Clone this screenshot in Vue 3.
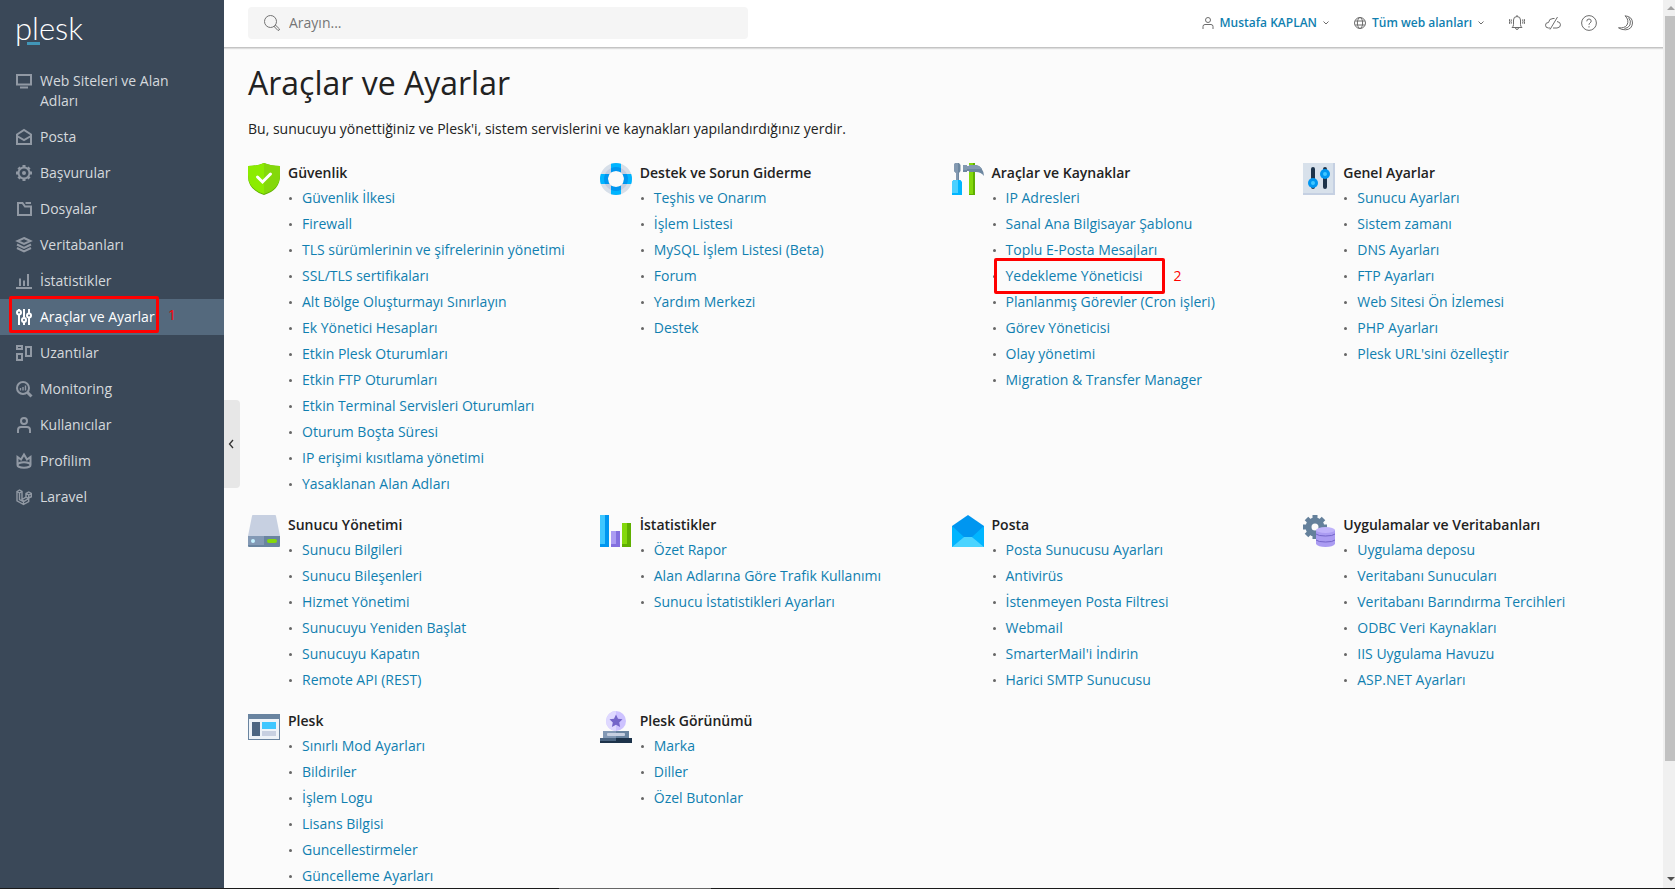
<script setup>
import { ref } from 'vue'

const search = ref('')

const menu = [
  { icon: 'screen', label: 'Web Siteleri ve Alan Adları' },
  { icon: 'mail', label: 'Posta' },
  { icon: 'gear', label: 'Başvurular' },
  { icon: 'folder', label: 'Dosyalar' },
  { icon: 'layers', label: 'Veritabanları' },
  { icon: 'chart', label: 'İstatistikler' },
  { icon: 'sliders', label: 'Araçlar ve Ayarlar', active: true, note: '1' },
  { icon: 'blocks', label: 'Uzantılar' },
  { icon: 'monitoring', label: 'Monitoring' },
  { icon: 'user', label: 'Kullanıcılar' },
  { icon: 'crown', label: 'Profilim' },
  { icon: 'laravel', label: 'Laravel' },
]

const groups = [
  {
    icon: 'shield',
    title: 'Güvenlik',
    links: [
      'Güvenlik İlkesi', 'Firewall', 'TLS sürümlerinin ve şifrelerinin yönetimi', 'SSL/TLS sertifikaları',
      'Alt Bölge Oluşturmayı Sınırlayın', 'Ek Yönetici Hesapları', 'Etkin Plesk Oturumları', 'Etkin FTP Oturumları',
      'Etkin Terminal Servisleri Oturumları', 'Oturum Boşta Süresi', 'IP erişimi kısıtlama yönetimi', 'Yasaklanan Alan Adları',
    ],
  },
  {
    icon: 'lifebuoy',
    title: 'Destek ve Sorun Giderme',
    links: ['Teşhis ve Onarım', 'İşlem Listesi', 'MySQL İşlem Listesi (Beta)', 'Forum', 'Yardım Merkezi', 'Destek'],
  },
  {
    icon: 'tools',
    title: 'Araçlar ve Kaynaklar',
    marked: 'Yedekleme Yöneticisi',
    links: [
      'IP Adresleri', 'Sanal Ana Bilgisayar Şablonu', 'Toplu E-Posta Mesajları', 'Yedekleme Yöneticisi',
      'Planlanmış Görevler (Cron işleri)', 'Görev Yöneticisi', 'Olay yönetimi', 'Migration & Transfer Manager',
    ],
  },
  {
    icon: 'settings',
    title: 'Genel Ayarlar',
    links: [
      'Sunucu Ayarları', 'Sistem zamanı', 'DNS Ayarları', 'FTP Ayarları', 'Web Sitesi Ön İzlemesi',
      'PHP Ayarları', "Plesk URL'sini özelleştir",
    ],
  },
  {
    icon: 'server',
    title: 'Sunucu Yönetimi',
    links: [
      'Sunucu Bilgileri', 'Sunucu Bileşenleri', 'Hizmet Yönetimi', 'Sunucuyu Yeniden Başlat',
      'Sunucuyu Kapatın', 'Remote API (REST)',
    ],
  },
  {
    icon: 'bars',
    title: 'İstatistikler',
    links: ['Özet Rapor', 'Alan Adlarına Göre Trafik Kullanımı', 'Sunucu İstatistikleri Ayarları'],
  },
  {
    icon: 'envelope',
    title: 'Posta',
    links: [
      'Posta Sunucusu Ayarları', 'Antivirüs', 'İstenmeyen Posta Filtresi', 'Webmail',
      "SmarterMail'i İndirin", 'Harici SMTP Sunucusu',
    ],
  },
  {
    icon: 'database',
    title: 'Uygulamalar ve Veritabanları',
    links: [
      'Uygulama deposu', 'Veritabanı Sunucuları', 'Veritabanı Barındırma Tercihleri',
      'ODBC Veri Kaynakları', 'IIS Uygulama Havuzu', 'ASP.NET Ayarları',
    ],
  },
  {
    icon: 'window',
    title: 'Plesk',
    links: [
      'Sınırlı Mod Ayarları', 'Bildiriler', 'İşlem Logu', 'Lisans Bilgisi', 'Guncellestirmeler', 'Güncelleme Ayarları',
    ],
  },
  {
    icon: 'stamp',
    title: 'Plesk Görünümü',
    links: ['Marka', 'Diller', 'Özel Butonlar'],
  },
]
</script>

<template>
  <div class="page">
    <aside class="sidebar">
      <a class="brand" href="#" aria-label="plesk">
        <span class="brand-name">plesk</span>
        <span class="brand-line"></span>
      </a>
      <nav>
        <a v-for="item in menu" :key="item.label" href="#" class="menu-item" :class="{ active: item.active }">
          <svg class="menu-icon" viewBox="0 0 16 16" aria-hidden="true">
            <g v-if="item.icon === 'screen'"><rect x="1" y="2" width="14" height="9.5" /><path d="M4 14.5h8" /></g>
            <g v-else-if="item.icon === 'mail'"><path d="M1 5.5 8 1l7 4.500V15H1z" /><path d="M1 7l7 4 7-4" /></g>
            <g v-else-if="item.icon === 'gear'">
              <circle cx="8" cy="8" r="5.500" /><circle cx="8" cy="8" r="2" class="solid" />
              <path d="M8 0v2.500M8 13.500V16M0 8h2.500M13.500 8H16M2.500 2.500l1.700 1.700M11.800 11.800l1.700 1.700M2.500 13.500l1.700-1.700M11.800 4.200l1.700-1.700" class="teeth" />
            </g>
            <g v-else-if="item.icon === 'folder'"><path d="M2 2h4.500l2.500 3.500h6V14H2zM9.500 2H15" /></g>
            <g v-else-if="item.icon === 'layers'">
              <path d="M8 1l6.500 3L8 7 1.500 4zM1 7.500l7 3.500 7-3.500M1 11l7 3.500 7-3.500" />
            </g>
            <g v-else-if="item.icon === 'chart'"><path d="M0 15h16M4 5.500V13M8 7.500V13M12 1v12" /></g>
            <g v-else-if="item.icon === 'sliders'">
              <path d="M3 0v1.500M3 6v10M8 0v8.500M8 13v3M13 0v4M13 9v7" />
              <circle cx="3" cy="3.600" r="2" /><circle cx="8" cy="11" r="2" /><circle cx="13" cy="6.500" r="2" />
            </g>
            <g v-else-if="item.icon === 'blocks'">
              <rect x="1" y="1" width="5" height="3" /><rect x="10" y="2" width="5" height="9" /><rect x="1" y="9" width="5" height="6" />
            </g>
            <g v-else-if="item.icon === 'monitoring'">
              <circle cx="7" cy="7" r="6" /><path d="M11.500 11.500l4 4" class="handle" /><path d="M4.500 7v2.500M7 6v3.500M9.500 4.500v5" class="thin" />
            </g>
            <g v-else-if="item.icon === 'user'">
              <circle cx="8" cy="4" r="3" /><path d="M2 16v-3q0-3 3-3h6q3 0 3 3v3" />
            </g>
            <g v-else-if="item.icon === 'crown'">
              <path d="M1.500 11.500V4l3.500 2.500L8 1.500l3 5L14.500 4v7.500" /><ellipse cx="8" cy="12" rx="6.500" ry="2.800" />
            </g>
            <g v-else class="thin">
              <path d="M1 2.500 3.500 1 6 2.500v8l4-2.300V4.500L12.700 3l2.600 1.500v3.200L12.700 9v3.500L7.500 15.500 1 11.800zM1 2.500 3.500 4 6 2.500M3.500 4v6.500l4 2.200V15.500M7.500 12.700 12.700 9.500M10 4.500 12.700 6v3M12.700 6l2.600-1.500M6 10.500 7.500 12M10 8.200l2.700 1.300" />
            </g>
          </svg>
          <span>{{ item.label }}</span>
          <span v-if="item.note" class="menu-mark"><b>{{ item.note }}</b></span>
        </a>
      </nav>
      <button type="button" class="collapse" aria-label="Menüyü daralt">
        <svg viewBox="0 0 6 10"><path d="M5 1 1.500 5 5 9" /></svg>
      </button>
    </aside>

    <div class="content">
      <header class="topbar">
        <label class="search">
          <svg viewBox="0 0 16 16" aria-hidden="true">
            <circle cx="6.500" cy="6.500" r="6" /><path d="M10.300 11.700l1.400-1.400 3.800 3.700q.3 1.200-1.500 1.500z" />
          </svg>
          <input v-model="search" type="text" placeholder="Arayın..." aria-label="Arayın" />
        </label>
        <div class="actions">
          <button type="button" class="dropdown">
            <svg class="small" viewBox="0 0 12 12"><circle cx="6" cy="3" r="2.500" /><path d="M1 12V9.500Q1 7.500 3 7.500h6q2 0 2 2V12" /></svg>
            Mustafa KAPLAN
            <svg class="chevron" viewBox="0 0 6 4"><path d="M.5.500 3 3 5.500.500" /></svg>
          </button>
          <button type="button" class="dropdown">
            <svg class="small" viewBox="0 0 12 12"><circle cx="6" cy="6" r="5.500" /><ellipse cx="6" cy="6" rx="2.600" ry="5.500" /><path d="M1.200 4h9.600M1.200 8h9.600" /></svg>
            Tüm web alanları
            <svg class="chevron" viewBox="0 0 6 4"><path d="M.5.500 3 3 5.500.500" /></svg>
          </button>
          <div class="icons">
            <button type="button" aria-label="Bildirimler">
              <svg viewBox="0 0 16 16"><path d="M3 12.500q1.500-1 1.500-3V5Q4.500 1.500 8 1.500T11.500 5v4.500q0 2 1.500 3zM6.500 12.500q0 2 1.500 2t1.500-2M2.500 4.500q-1 2 0 4M.8 4q-1 2.500 0 5M13.500 4.500q1 2 0 4M15.200 4q1 2.500 0 5M8 0v1.500" /></svg>
            </button>
            <button type="button" aria-label="Bulut">
              <svg viewBox="0 0 16 16"><path d="M5 13H3.500Q.5 13 .5 10.200T3.500 7.500Q4 3.500 8 3.500h1.500M12 6.500q3.500.5 3.500 3.300T12 13H8M12.500 2 5 14.500" /></svg>
            </button>
            <button type="button" aria-label="Yardım">
              <svg viewBox="0 0 16 16"><circle cx="8" cy="8" r="7.400" /><path d="M5.800 6.300q0-2.300 2.200-2.300t2.200 2Q10.200 7.200 9 8T8 9.800M8 11.200v1.300" /></svg>
            </button>
            <button type="button" aria-label="Koyu tema">
              <svg viewBox="0 0 16 16"><path d="M8 .8Q15.500 1.500 15.500 8 15 14.500 8.500 14.800 4.500 15 1.500 12.800 7.500 13.500 10 10 12.500 5 8 .8zM11.500 2.500Q14.500 6 13 10 11.500 13 7.500 13.600" /></svg>
            </button>
          </div>
        </div>
      </header>

      <main>
        <h1>Araçlar ve Ayarlar</h1>
        <p>Bu, sunucuyu yönettiğiniz ve Plesk'i, sistem servislerini ve kaynakları yapılandırdığınız yerdir.</p>
        <div class="groups">
          <section v-for="group in groups" :key="group.title" class="group">
            <svg class="group-icon" viewBox="0 0 32 32" aria-hidden="true">
              <g v-if="group.icon === 'shield'">
                <path d="M16 0Q9 3 0 3v10q0 14 16 19 16-5 16-19V3Q23 3 16 0z" fill="#5faf00" />
                <path d="M16 0Q9 3 0 3v9q0 14 16 19z" fill="#8cec00" />
                <path d="M16 0q7 3 16 3v9q0 14-16 19z" fill="#84d80b" />
                <path d="M9.500 14l5 5 8-8" fill="none" stroke="#fff" stroke-width="3" stroke-linecap="round" />
              </g>
              <g v-else-if="group.icon === 'lifebuoy'">
                <circle cx="16" cy="16" r="12" fill="none" stroke="#d7dfe9" stroke-width="8" />
                <circle cx="16" cy="16" r="10" fill="none" stroke="#c5cee0" stroke-width="4" />
                <path d="M11 .8Q16-.8 21 .8v8.500q-5-2.600-10 0zM11 31.200q5 1.600 10 0v-8.500q-5 2.600-10 0zM.8 11Q-.8 16 .8 21h8.500q-2.600-5 0-10zM31.200 11q1.600 5 0 10h-8.500q2.600-5 0-10z" fill="#00b5ff" />
                <path d="M11 5.200q5-2.400 10 0v4.100q-5-2.600-10 0zM11 26.800q5 2.400 10 0v-4.100q-5 2.600-10 0zM5.200 11q-2.400 5 0 10h4.100q-2.600-5 0-10zM26.800 11q2.400 5 0 10h-4.100q2.600-5 0-10z" fill="#0096f0" />
              </g>
              <g v-else-if="group.icon === 'tools'">
                <path d="M3 0h4l1.500 2v6L7 10v8H4v-8L2 8V2z" fill="#6d87a0" />
                <path d="M2 2l1-2h3v18H4v-8L2 8z" fill="#8399b1" />
                <path d="M1.500 17h7L10 19v13H0V19z" fill="#00b5ff" /><path d="M1.500 17H6v13H0V19z" fill="#4bd0ff" />
                <path d="M17 0h6v32h-6z" fill="#5faf00" /><path d="M17 0h4v31h-4z" fill="#84d80b" />
                <path d="M11 2h4v1h2V2h7q7 1 8 11-3-4-8-4h-7V8h-2v1h-4z" fill="#6d87a0" />
                <path d="M11 2h4v1h2V2h7q4 1 6 4H15v1h-4z" fill="#8399b1" />
              </g>
              <g v-else-if="group.icon === 'settings'">
                <path d="M0 0h32v32H0z" fill="#c5d0e2" /><path d="M0 0h30v30H0z" fill="#d8e1eb" />
                <path d="M10 6v18M22 6v18" stroke="#1d334a" stroke-width="4" stroke-linecap="round" />
                <circle cx="10" cy="20" r="5" fill="#0096f0" /><circle cx="10" cy="20" r="2" fill="#3fc7ff" />
                <circle cx="22" cy="11" r="5" fill="#0096f0" /><circle cx="22" cy="11" r="2" fill="#3fc7ff" />
              </g>
              <g v-else-if="group.icon === 'server'">
                <path d="M5 0h22q1 0 1 1l4 20H0L4 1q0-1 1-1z" fill="#c7d0e1" />
                <path d="M0 21h32v10q0 1-1 1H1q-1 0-1-1z" fill="#6984a0" /><path d="M0 21h16v9H0z" fill="#8399b5" />
                <circle cx="5" cy="26" r="2" fill="#c5f1ff" /><rect x="19" y="24" width="10" height="4" rx="2" fill="#84d80b" />
              </g>
              <g v-else-if="group.icon === 'bars'">
                <path d="M0 0h9v32H0z" fill="#0096f0" /><path d="M0 0h5v29H0z" fill="#3fc7ff" />
                <path d="M11 16h9v16h-9z" fill="#8370df" /><path d="M11 16h5v13h-5z" fill="#ab9cf2" />
                <path d="M22 8h9v24h-9z" fill="#5faf00" /><path d="M22 8h5v21h-5z" fill="#84d80b" />
              </g>
              <g v-else-if="group.icon === 'envelope'">
                <path d="M0 11 16 0l16 11v21H0z" fill="#0096f0" />
                <path d="M0 11l12 11L0 32zM32 11 20 22l12 10z" fill="#00b5ff" /><path d="M0 32l12-10h8l12 10z" fill="#4bd4ff" />
              </g>
              <g v-else-if="group.icon === 'database'">
                <circle cx="12" cy="12" r="6.500" fill="none" stroke="#64809b" stroke-width="6" />
                <path d="M12 0v4M12 20v4M0 12h4M20 12h4M3.500 3.500l3 3M17.500 17.500l3 3M3.500 20.500l3-3M17.500 6.500l3-3" stroke="#64809b" stroke-width="5" />
                <path d="M13 15h19v14q-2 3-9.500 3T13 29z" fill="#ab9cf2" /><ellipse cx="22.500" cy="15" rx="9.500" ry="3" fill="#c0b3fa" />
                <path d="M13 19q2 2 9.500 2T32 19M13 25q2 2 9.500 2T32 25" fill="none" stroke="#7465c9" stroke-width="1" />
              </g>
              <g v-else-if="group.icon === 'window'">
                <path d="M0 3h32v26H0z" fill="#6984a0" /><path d="M1 8h30v20H1z" fill="#eef3f8" />
                <path d="M4 11h8v14H4z" fill="#4c6581" /><path d="M14 11h14v7H14z" fill="#3fc7ff" /><path d="M14 20h14v5H14z" fill="#c7d0e1" />
              </g>
              <g v-else>
                <circle cx="16" cy="10" r="10" fill="#cdc2ff" /><path d="M16 0a10 10 0 0 0 0 20z" fill="#dfd9ff" />
                <path d="M16 3.500l2 4.200 4.500.5-3.300 3.200.9 4.600-4.100-2.200-4.100 2.200.9-4.600-3.300-3.200 4.500-.5z" fill="#7465c9" />
                <path d="M3 20h26v7H3z" fill="#6984a0" /><path d="M3 20h13v7H3z" fill="#8399b5" />
                <rect x="7" y="22" width="18" height="3" rx="1" fill="#c7d0e1" />
                <path d="M0 27h32v5H0z" fill="#1d334a" /><path d="M0 27h16v3H0z" fill="#4c6581" />
              </g>
            </svg>
            <div>
              <h2>{{ group.title }}</h2>
              <ul>
                <li v-for="link in group.links" :key="link">
                  <a href="#">{{ link }}</a>
                  <span v-if="link === group.marked" class="link-mark"><b>2</b></span>
                </li>
              </ul>
            </div>
          </section>
        </div>
      </main>
    </div>

    <div class="scrollbar" aria-hidden="true">
      <svg viewBox="0 0 8 4"><path d="M0 4 4 0l4 4z" fill="#a3a3a3" /></svg>
      <div class="track"><div class="thumb"></div><div class="rest"></div></div>
      <svg viewBox="0 0 8 4"><path d="M0 0h8L4 4z" fill="#505050" /></svg>
    </div>
    <div class="edge" aria-hidden="true"><i></i></div>
  </div>
</template>

<style>
body {
  margin: 0;
}
</style>

<style scoped>
.page {
  position: relative;
  display: flex;
  height: 100vh;
  overflow: hidden;
  background: #fbfbfb;
  color: #222;
  font: 14px/20px "Open Sans", "Noto Sans", sans-serif;
}
a {
  color: #107fb0;
  text-decoration: none;
}
button {
  padding: 0;
  border: 0;
  background: none;
  font: inherit;
  cursor: pointer;
}
svg {
  display: block;
  flex: none;
}
.sidebar {
  position: relative;
  flex: none;
  width: 224px;
  background: #3a4858;
}
.brand {
  display: block;
  height: 63px;
  padding: 8px 15px 0;
  box-sizing: border-box;
  color: #fff;
}
.brand-name {
  display: block;
  font: 300 31px/40px Lato, "Open Sans", sans-serif;
}
.brand-line {
  display: block;
  width: 13px;
  height: 3px;
  margin: -6px 0 0 12px;
  background: #4196b8;
}
.menu-item {
  position: relative;
  display: flex;
  gap: 8px;
  padding: 8px 16px;
  color: #d5d9dd;
  font-weight: 500;
}
.menu-item.active {
  background: #54697d;
  color: #fff;
}
.menu-icon {
  width: 16px;
  height: 16px;
  margin-top: 2px;
  overflow: visible;
  fill: none;
  stroke: #9199a4;
  stroke-width: 2;
}
.menu-icon .thin {
  stroke-width: 1.4;
}
.menu-icon .teeth,
.menu-icon .handle {
  stroke-width: 3;
}
.menu-icon .solid {
  fill: #9199a4;
  stroke: none;
}
.active .menu-icon {
  stroke: #fff;
}
.menu-mark,
.link-mark {
  position: absolute;
  box-sizing: border-box;
  border: 3px solid #f00;
  border-radius: 2px;
  pointer-events: none;
}
.menu-mark {
  inset: -3px 65px 2px 9px;
}
.link-mark {
  top: -5px;
  left: 2px;
  width: 171px;
  height: 36px;
}
.menu-mark b,
.link-mark b {
  position: absolute;
  top: 50%;
  left: 100%;
  margin: -10px 0 0 12px;
  color: #f00;
  font-weight: 400;
  line-height: 20px;
}
.collapse {
  position: absolute;
  top: 400px;
  left: 100%;
  display: flex;
  align-items: center;
  width: 16px;
  height: 88px;
  padding-left: 4px;
  border-radius: 0 4px 4px 0;
  background: #e7e7e7;
}
.collapse svg {
  width: 6px;
  height: 10px;
  fill: none;
  stroke: #333;
  stroke-width: 1.3;
}
.content {
  flex: 1;
  min-width: 0;
}
.topbar {
  display: flex;
  justify-content: space-between;
  padding: 7px 30px 8px 24px;
  border-bottom: 1px solid #c4c4c4;
  box-shadow: 0 1px 1px #ddd;
  background: #fff;
}
.search {
  display: flex;
  align-items: center;
  gap: 9px;
  width: 500px;
  height: 32px;
  padding: 0 16px;
  box-sizing: border-box;
  border-radius: 4px;
  background: #f5f5f5;
}
.search svg {
  width: 16px;
  height: 16px;
  fill: none;
  stroke: #737373;
}
.search input {
  flex: 1;
  min-width: 0;
  padding: 0;
  border: 0;
  outline: 0;
  background: none;
  color: #222;
  font: inherit;
}
.search input::placeholder {
  color: #757575;
}
.actions,
.icons,
.dropdown {
  display: flex;
  align-items: center;
}
.actions {
  gap: 25px;
}
.actions svg {
  width: 16px;
  height: 16px;
  fill: none;
  stroke: #6c6c6c;
}
.actions .small {
  width: 12px;
  height: 12px;
}
.actions .chevron {
  width: 6px;
  height: 4px;
}
.dropdown {
  gap: 6px;
  color: #107fb0;
  font-size: 12px;
  font-weight: 600;
}
.icons {
  gap: 20px;
}
main {
  padding: 13px 24px 0;
}
h1 {
  margin: 0;
  font-size: 32px;
  font-weight: 400;
  line-height: 44px;
}
p {
  margin: 14px 0 22px;
}
.groups {
  display: grid;
  grid-template-columns: repeat(4, minmax(0, 1fr));
  gap: 16px;
}
.group {
  display: flex;
  gap: 8px;
}
.group-icon {
  width: 32px;
  height: 32px;
  margin-top: 2px;
}
h2 {
  margin: 0;
  font-size: 14px;
  font-weight: 600;
  line-height: 24px;
}
ul {
  margin: 0;
  padding: 0;
  list-style: none;
}
li {
  position: relative;
  display: flex;
  align-items: center;
  gap: 10px;
  padding-left: 1px;
  line-height: 26px;
  white-space: nowrap;
}
li::before {
  width: 3px;
  height: 3px;
  border-radius: 2px;
  background: #666;
  content: "";
}
.scrollbar {
  display: flex;
  flex: none;
  flex-direction: column;
  align-items: flex-end;
  width: 12px;
  padding: 6px 0 8px;
  box-sizing: border-box;
  background: #f0f0f0;
}
.scrollbar svg {
  width: 8px;
  height: 4px;
}
.track {
  display: flex;
  flex: 1;
  flex-direction: column;
  width: 10px;
  padding: 6px 0 10px;
}
.thumb {
  flex: 7;
  background: #c1c1c1;
}
.rest {
  flex: 1;
}
.edge {
  position: absolute;
  inset: auto 0 0;
  height: 1px;
  background: #1b1b1b;
}
.edge i {
  display: block;
  width: 152px;
  height: 1px;
  margin-left: 559px;
  background: #666;
}
</style>
